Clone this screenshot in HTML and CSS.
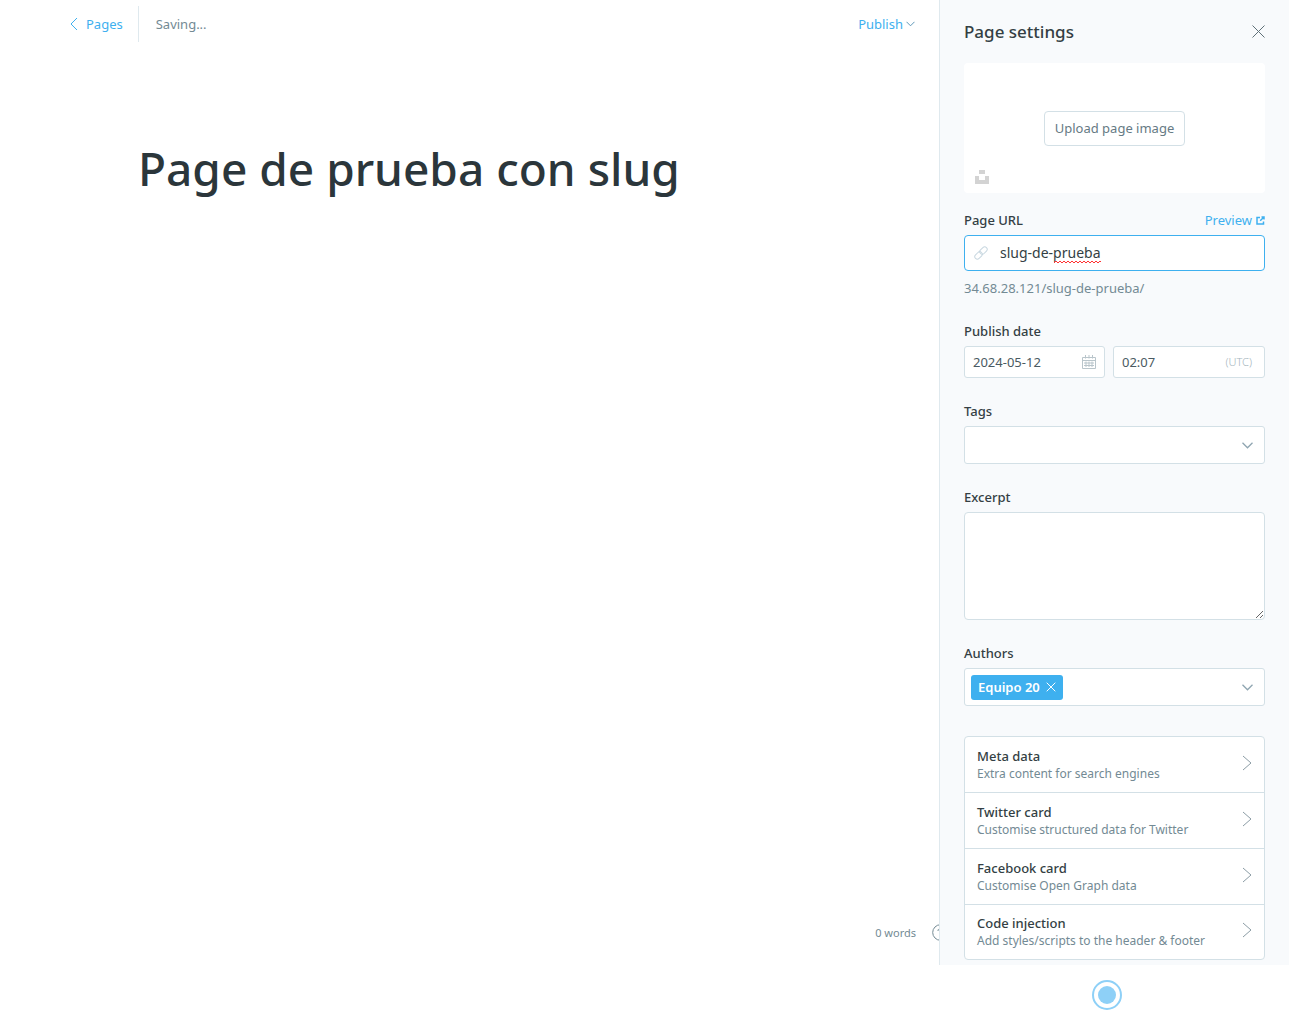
FILE: index.html
```html
<!DOCTYPE html>
<html lang="en">
<head>
<meta charset="utf-8">
<title>Page editor</title>
<link rel="stylesheet" href="styles.css">
</head>
<body>
<div class="app">
  <main class="editor">
    <header class="toolbar">
      <a class="back" href="#pages">
        <svg width="8" height="14" viewBox="0 0 8 14"><path d="M7 1 1 7l6 6"/></svg>
        Pages
      </a>
      <span class="status">Saving...</span>
      <button class="publish" type="button">Publish
        <svg width="9" height="6" viewBox="0 0 9 6"><path d="m.5.8 4 4 4-4"/></svg>
      </button>
    </header>
    <h1 class="title">Page de prueba con slug</h1>
    <footer class="wordcount">
      <span>0 words</span>
      <button class="help" type="button" aria-label="Help">
        <svg width="17" height="17" viewBox="0 0 17 17"><circle cx="8.500" cy="8.500" r="7.800"/><path d="M6 7c0-3.600 5-3.400 5-.5 0 1.800-2.500 1.800-2.500 3.700M8.500 12v1"/></svg>
      </button>
    </footer>
  </main>

  <aside class="settings">
    <header class="settings-head">
      <h2>Page settings</h2>
      <button class="close" type="button" aria-label="Close">
        <svg width="13" height="13" viewBox="0 0 13 13"><path d="m.5.5 12 12M12.500.5l-12 12"/></svg>
      </button>
    </header>

    <div class="uploader">
      <button class="upload" type="button">Upload page image</button>
      <button class="unsplash" type="button" aria-label="Unsplash">
        <svg width="14" height="14" viewBox="0 0 14 14"><path d="M4 0h6v4H4zM0 6h4v4h6V6h4v8H0z"/></svg>
      </button>
    </div>

    <form class="fields">
      <div class="field">
        <div class="label-row">
          <label for="url">Page URL</label>
          <a class="preview" href="#preview">Preview
            <svg width="9" height="9" viewBox="0 0 9 9"><path d="M4 1.500H1V8h6.500V5.500M5.500 1H8v2.500M8 1 4.200 4.800"/></svg>
          </a>
        </div>
        <div class="url">
          <svg width="14" height="14" viewBox="0 0 14 14"><g transform="rotate(-45 7 7)"><rect x="-.7" y="4.500" width="8.400" height="5" rx="2.500"/><rect x="6.300" y="4.500" width="8.400" height="5" rx="2.500"/></g></svg>
          <input id="url" type="text" value="slug-de-prueba" spellcheck="false">
          <span class="squiggle"></span>
        </div>
        <p class="hint">34.68.28.121/slug-de-prueba/</p>
      </div>

      <div class="field">
        <label for="date">Publish date</label>
        <div class="datetime">
          <div class="box date">
            <input id="date" type="text" value="2024-05-12">
            <svg width="14" height="14" viewBox="0 0 14 14"><path d="M.5 2.500h13v11H.5zM.5 5.500h13M3.500 0v3.500M7 0v3.500M10.500 0v3.500M2 8h10M2 10.500h10M4 6.500V12M7 6.500V12M10 6.500V12"/></svg>
          </div>
          <div class="box time">
            <input type="text" value="02:07" aria-label="Publish time">
            <span>(UTC)</span>
          </div>
        </div>
      </div>

      <div class="field">
        <label for="tags">Tags</label>
        <div class="box picker">
          <select id="tags"><option></option></select>
          <svg width="11" height="7" viewBox="0 0 11 7"><path d="m.5.8 5 5 5-5"/></svg>
        </div>
      </div>

      <div class="field">
        <label for="excerpt">Excerpt</label>
        <textarea id="excerpt"></textarea>
      </div>

      <div class="field">
        <label for="authors">Authors</label>
        <div class="box picker">
          <button class="token" type="button">Equipo 20
            <svg width="10" height="10" viewBox="0 0 10 10"><path d="m.7.700 8.600 8.600M9.300.700.7 9.300"/></svg>
          </button>
          <select id="authors"><option></option></select>
          <svg width="11" height="7" viewBox="0 0 11 7"><path d="m.5.8 5 5 5-5"/></svg>
        </div>
      </div>
    </form>

    <nav class="more">
      <button type="button"><span><b>Meta data</b><small>Extra content for search engines</small></span>
        <svg width="10" height="16" viewBox="0 0 10 16"><path d="m1 1 8 7-8 7"/></svg></button>
      <button type="button"><span><b>Twitter card</b><small>Customise structured data for Twitter</small></span>
        <svg width="10" height="16" viewBox="0 0 10 16"><path d="m1 1 8 7-8 7"/></svg></button>
      <button type="button"><span><b>Facebook card</b><small>Customise Open Graph data</small></span>
        <svg width="10" height="16" viewBox="0 0 10 16"><path d="m1 1 8 7-8 7"/></svg></button>
      <button type="button"><span><b>Code injection</b><small>Add styles/scripts to the header &amp; footer</small></span>
        <svg width="10" height="16" viewBox="0 0 10 16"><path d="m1 1 8 7-8 7"/></svg></button>
    </nav>
  </aside>
</div>
<div class="dock">
  <button class="record" type="button" aria-label="Record"></button>
</div>
</body>
</html>
```
FILE: styles.css
```css
* { box-sizing: border-box; }
body {
  margin: 0;
  min-height: 100vh;
  display: flex;
  flex-direction: column;
  background: #fff;
  color: #343f44;
  font: 13px/16px "Noto Sans", "Open Sans", sans-serif;
}
h1, h2, p { margin: 0; }
button, input, select, textarea {
  margin: 0;
  padding: 0;
  border: 0;
  background: none;
  color: inherit;
  font: inherit;
  outline: none;
}
a { text-decoration: none; }
svg { fill: none; stroke: currentColor; flex: none; }

.app { flex: 1; display: flex; }

.editor {
  flex: 1;
  min-width: 0;
  display: flex;
  flex-direction: column;
  overflow: hidden;
}
.toolbar {
  display: flex;
  align-items: center;
  padding: 6px 24px 0 70px;
}
.back {
  display: flex;
  align-items: center;
  gap: 8px;
  height: 36px;
  padding-right: 15px;
  border-right: 1px solid #dfe9ee;
  color: #3eb0ef;
}
.status { padding-left: 17px; color: #738a94; }
.publish {
  display: flex;
  align-items: center;
  gap: 3px;
  margin-left: auto;
  color: #3eb0ef;
}
.publish svg { color: #5f98b8; }
.title {
  margin: 93px 138px 0;
  color: #2b363b;
  font-size: 46px;
  font-weight: 500;
  line-height: 66px;
}
.wordcount {
  display: flex;
  align-items: center;
  justify-content: flex-end;
  gap: 16px;
  margin: auto -10px 24px 0;
  color: #738a94;
  font-size: 11px;
}
.help { display: flex; color: #738a94; }

.settings {
  width: 350px;
  padding: 0 24px 5px;
  border-left: 1px solid #dfe9ee;
  background: #f8fafc;
}
.settings-head {
  display: flex;
  align-items: center;
  justify-content: space-between;
  height: 63px;
}
.settings-head h2 { font-size: 17px; font-weight: 500; line-height: 24px; }
.close { display: flex; color: #5f7078; }

.uploader {
  position: relative;
  display: flex;
  align-items: center;
  justify-content: center;
  height: 130px;
  margin-bottom: 19px;
  border-radius: 4px;
  background: #fff;
}
.upload {
  height: 35px;
  padding: 0 10px;
  border: 1px solid #d3e0e6;
  border-radius: 4px;
  color: #667a84;
}
.unsplash {
  position: absolute;
  left: 11px;
  bottom: 9px;
  display: flex;
  color: #d3d3d3;
}
.unsplash svg { fill: currentColor; stroke: none; }

.fields { display: flex; flex-direction: column; gap: 25px; }
.field { display: flex; flex-direction: column; gap: 7px; }
label { font-weight: 500; }
.label-row { display: flex; justify-content: space-between; }
.preview { display: flex; align-items: center; gap: 4px; color: #3eb0ef; }
.preview svg { stroke-width: 1.5; }
.url {
  position: relative;
  display: flex;
  align-items: center;
  gap: 12px;
  height: 36px;
  padding: 0 9px;
  border: 1px solid #3eb0ef;
  border-radius: 4px;
  background: #fff;
}
.url svg { color: #c8d7e0; }
.url input { flex: 1; min-width: 0; font-size: 14px; line-height: 20px; }
.squiggle {
  position: absolute;
  left: 89px;
  top: 24px;
  width: 47px;
  height: 3px;
  background: radial-gradient(circle at 2px 3px, transparent 1px, #f33 1px, #f33 2px, transparent 2px) 0 0 / 4px 3px;
}
.hint { color: #738a94; line-height: 20px; }

.box {
  display: flex;
  align-items: center;
  border: 1px solid #d3e0e6;
  border-radius: 3px;
  background: #fff;
}
.datetime { display: grid; grid-template-columns: 141fr 152fr; gap: 8px; }
.date, .time { height: 32px; padding: 0 8px; color: #4a5a62; }
.time { padding-right: 12px; }
.box input { flex: 1; min-width: 0; width: 0; }
.date svg { color: #b9c5cb; }
.time span { color: #a5b5bd; font-size: 11px; font-weight: 300; }
.picker { height: 38px; padding: 0 11px 0 6px; }
.picker select { flex: 1; min-width: 0; height: 36px; appearance: none; }
.picker > svg { color: #8fa5b1; stroke-width: 1.3; }
textarea {
  display: block;
  width: 100%;
  height: 108px;
  border: 1px solid #d3e0e6;
  border-radius: 4px;
  background: #fff;
  resize: vertical;
}
.token {
  display: flex;
  align-items: center;
  gap: 6px;
  height: 25px;
  padding: 0 7px;
  border-radius: 3px;
  background: #3eb0ef;
  color: #fff;
  font-weight: 600;
}

.more {
  margin-top: 30px;
  border: 1px solid #d3e0e6;
  border-radius: 4px;
  background: #fff;
}
.more button {
  display: flex;
  align-items: center;
  justify-content: space-between;
  width: 100%;
  height: 56px;
  padding: 0 12px;
  text-align: left;
}
.more button + button { border-top: 1px solid #d3e0e6; }
.more button:first-child, .more button:last-child { height: 55px; }
.more b, .more small { display: block; line-height: 18px; }
.more b { font-size: 13px; font-weight: 500; }
.more small { color: #738a94; font-size: 12px; }
.more svg { color: #8b9ca5; margin-bottom: 4px; }

.dock { display: flex; justify-content: flex-end; height: 55px; padding: 15px 167px 0; }
.record {
  width: 30px;
  height: 30px;
  border: 2px solid #8ed0f7;
  border-radius: 50%;
  padding: 4px;
  background: #8ed0f7;
  background-clip: content-box;
}
```
